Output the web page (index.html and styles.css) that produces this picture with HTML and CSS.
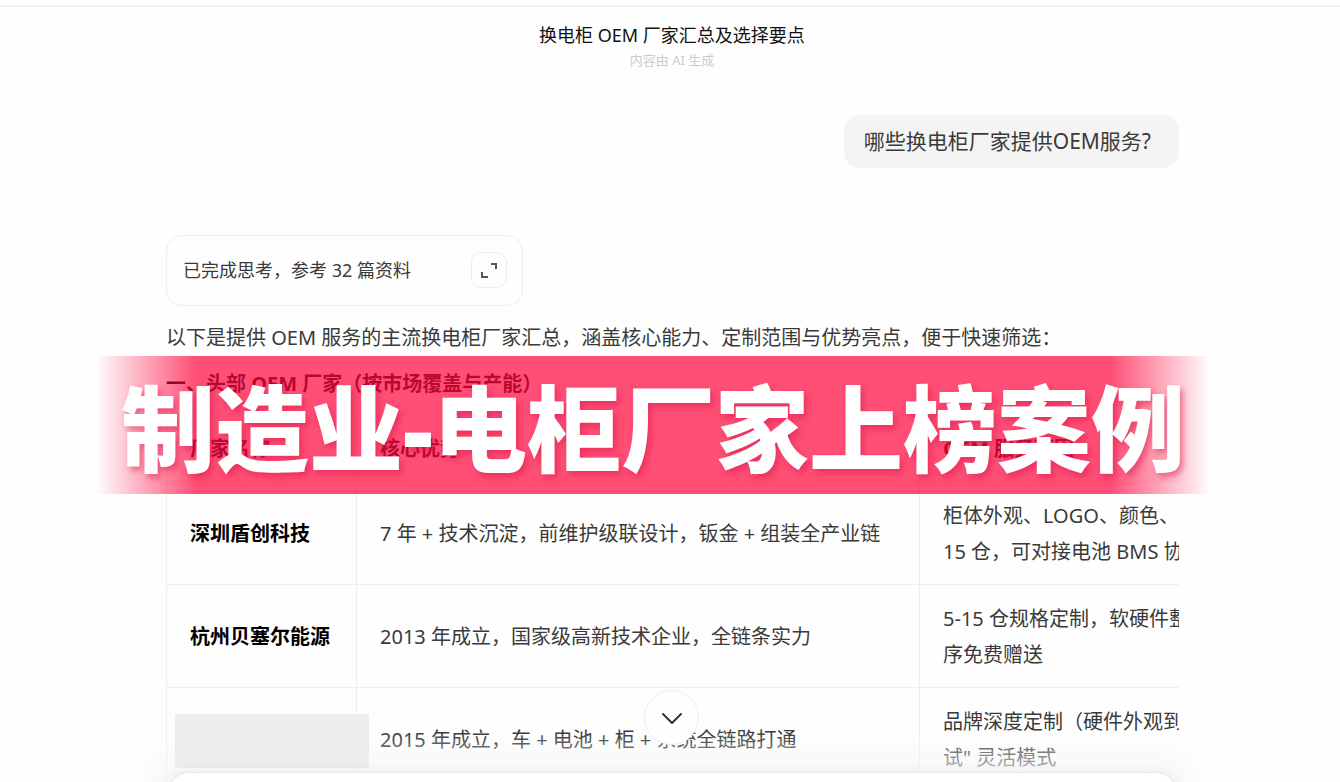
FILE: index.html
```
<!DOCTYPE html>
<html lang="zh-CN">

<head>
    <meta charset="UTF-8">
    <meta name="viewport" content="width=device-width, initial-scale=1.0">
    <title>换电柜 OEM 厂家汇总及选择要点</title>
    <link rel="stylesheet" href="styles.css">
</head>

<body>
    <div class="chat">
        <header class="chat-header">
            <h1>换电柜 OEM 厂家汇总及选择要点</h1>
            <p>内容由 AI 生成</p>
        </header>

        <main class="messages">
            <div class="question">哪些换电柜厂家提供OEM服务?</div>

            <div class="thinking">
                <span>已完成思考，参考 32 篇资料</span>
                <button type="button" class="expand" aria-label="展开">
                    <svg width="18" height="18" viewBox="0 0 18 18" fill="none" stroke="#555" stroke-width="2">
                        <path d="M11 3h5v5M2 11v5h6" />
                    </svg>
                </button>
            </div>

            <p class="intro">以下是提供 OEM 服务的主流换电柜厂家汇总，涵盖核心能力、定制范围与优势亮点，便于快速筛选：</p>
            <h2>一、头部 OEM 厂家（按市场覆盖与产能）</h2>

            <div class="table-wrap">
                <table>
                    <colgroup>
                        <col class="col-name">
                        <col class="col-strength">
                        <col>
                    </colgroup>
                    <thead>
                        <tr>
                            <th>厂家名称</th>
                            <th>核心优势</th>
                            <th>OEM 服务范围</th>
                        </tr>
                    </thead>
                    <tbody>
                        <tr>
                            <td class="name">深圳盾创科技</td>
                            <td>7 年 + 技术沉淀，前维护级联设计，钣金 + 组装全产业链</td>
                            <td>柜体外观、LOGO、颜色、<br>15 仓，可对接电池 BMS 协</td>
                        </tr>
                        <tr>
                            <td class="name">杭州贝塞尔能源</td>
                            <td>2013 年成立，国家级高新技术企业，全链条实力</td>
                            <td>5-15 仓规格定制，软硬件整<br>序免费赠送</td>
                        </tr>
                        <tr>
                            <td class="name"><span class="mask"></span></td>
                            <td>2015 年成立，车 + 电池 + 柜 + 系统全链路打通</td>
                            <td>品牌深度定制（硬件外观到<br>试" 灵活模式</td>
                        </tr>
                    </tbody>
                </table>
            </div>
        </main>

        <div class="fade"></div>
        <div class="composer"></div>
        <button type="button" class="scroll-down" aria-label="滚动到底部">
            <svg width="22" height="22" viewBox="0 0 22 22" fill="none" stroke="#333" stroke-width="2" stroke-linecap="round" stroke-linejoin="round">
                <path d="M2 7l9 9 9-9" />
            </svg>
        </button>

        <div class="banner">制造业-电柜厂家上榜案例</div>
    </div>
</body>

</html>
```
FILE: styles.css
```
* {
    box-sizing: border-box;
}

body {
    margin: 0;
    background: #fefefe;
    color: #3a3a3a;
    font-family: "Noto Sans", "Noto Sans CJK SC", sans-serif;
    font-size: 20px;
    line-height: 36px;
}

h1,
h2,
p {
    margin: 0;
}

button {
    display: flex;
    align-items: center;
    justify-content: center;
    padding: 0;
    background: #fefefe;
    border: 1px solid #eee;
    cursor: pointer;
}

.chat {
    position: relative;
    height: 100vh;
    overflow: hidden;
    padding-top: 5px;
}

.chat-header {
    border-top: 2px solid #f0f0f0;
    padding: 16px 0 0 4px;
    text-align: center;
}

.chat-header h1 {
    color: #111;
    font-size: 18px;
    font-weight: 400;
    line-height: 24px;
}

.chat-header p {
    color: #ccc;
    font-size: 13px;
    line-height: 26px;
}

.messages {
    display: flex;
    flex-direction: column;
    margin: 42px 161px 0 166px;
}

.question {
    align-self: flex-end;
    padding: 8px 28px 9px 20px;
    background: #f4f4f4;
    border-radius: 16px;
    font-size: 21px;
}

.thinking {
    display: flex;
    align-items: center;
    justify-content: space-between;
    align-self: flex-start;
    width: 357px;
    margin-top: 67px;
    padding: 16px 15px 17px 16px;
    border: 1px solid #eee;
    border-radius: 16px;
    font-size: 18px;
}

.expand {
    width: 36px;
    height: 36px;
    border-radius: 10px;
}

.intro {
    margin-top: 14px;
    white-space: nowrap;
}

h2 {
    margin-top: 10px;
    color: #000;
    font-size: 20px;
    font-weight: 700;
}

.table-wrap {
    margin-top: 12px;
    overflow: hidden;
}

table {
    width: 1200px;
    table-layout: fixed;
    border-collapse: collapse;
}

.col-name {
    width: 190px;
}

.col-strength {
    width: 563px;
}

th,
td {
    padding: 16px 23px 14px;
    border: 1px solid #eee;
    text-align: left;
    white-space: nowrap;
}

th {
    color: #000;
}

.name {
    position: relative;
    color: #000;
    font-weight: 700;
}

/* covers the hidden supplier name */
.mask {
    position: absolute;
    z-index: 3;
    top: 26px;
    left: 8px;
    width: 194px;
    height: 54px;
    background: #ededed;
}

.fade {
    position: absolute;
    z-index: 2;
    right: 130px;
    bottom: 0;
    left: 130px;
    height: 50px;
    background: linear-gradient(rgba(254, 254, 254, 0), rgba(246, 246, 246, 0.9));
    mask-image: linear-gradient(90deg, transparent, #000 50px, #000 calc(100% - 50px), transparent);
}

.composer {
    position: absolute;
    z-index: 4;
    right: 161px;
    bottom: -70px;
    left: 166px;
    height: 80px;
    background: #fff;
    border: 1px solid #e8e8e8;
    border-radius: 24px;
    box-shadow: 0 0 16px rgba(0, 0, 0, 0.06);
}

.scroll-down {
    position: absolute;
    z-index: 5;
    bottom: 37px;
    left: calc(50% - 26px);
    width: 55px;
    height: 55px;
    border-radius: 50%;
}

.banner {
    position: absolute;
    z-index: 6;
    top: 356px;
    right: 130px;
    left: 96px;
    height: 138px;
    background: linear-gradient(90deg, rgba(255, 11, 65, 0), rgba(255, 11, 65, 0.72) 100px, rgba(255, 11, 65, 0.72) calc(100% - 100px), rgba(255, 11, 65, 0));
    color: #fff;
    font-size: 94px;
    font-weight: 900;
    line-height: 146px;
    text-align: center;
    text-shadow: 3px 4px 6px rgba(220, 20, 70, 0.5);
    white-space: nowrap;
}
```
